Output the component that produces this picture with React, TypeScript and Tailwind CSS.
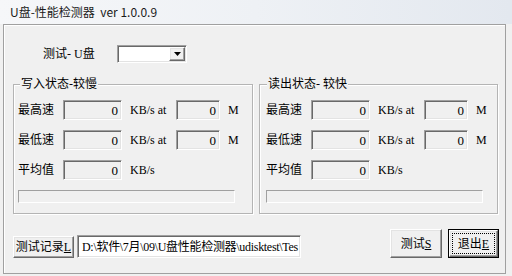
import React from 'react';

const sunken =
  'border border-t-[#a0a0a0] border-l-[#a0a0a0] border-b-white border-r-white shadow-[inset_1px_1px_0_#696969,inset_-1px_-1px_0_#e3e3e3]';
const raised =
  'border border-t-white border-l-white border-b-[#696969] border-r-[#696969] shadow-[inset_-1px_-1px_0_#a0a0a0,inset_1px_1px_0_#e3e3e3]';

function ReadBox({ w }: { w: string }) {
  return (
    <div className={`${w} h-[20px] ${sunken} bg-[#f0f0f0] flex items-center justify-end pr-[3px] text-[13px] leading-none`}>
      0
    </div>
  );
}

function StatusGroup({ title, width, pad, legendLeft }: { title: string; width: string; pad: string; legendLeft: string }) {
  const rows = ['最高速', '最低速', '平均值'];
  return (
    <div className={`relative ${width} h-[130px] border border-[#b4b4b4] shadow-[inset_1px_1px_0_#fff,1px_1px_0_#fff] ${pad} pt-[15px]`}>
      <span className={`absolute top-[-9px] ${legendLeft} bg-[#f0f0f0] px-[1px] text-[12px] leading-[16px]`}>{title}</span>
      <div className="flex flex-col gap-[10px]">
        {rows.map((label, i) => (
          <div key={label} className="flex items-center h-[20px]">
            <span className="w-[45px] text-[12px]">{label}</span>
            <ReadBox w="w-[59px]" />
            <span className="ml-[8px] w-[46px] text-[12px] whitespace-nowrap">{i < 2 ? 'KB/s at' : 'KB/s'}</span>
            {i < 2 && (
              <>
                <ReadBox w="w-[44px]" />
                <span className="ml-[8px] text-[12px]">M</span>
              </>
            )}
          </div>
        ))}
      </div>
      <div className="mt-[10px] w-[217px] h-[13px] border border-t-[#a0a0a0] border-l-[#a0a0a0] border-b-white border-r-white" />
    </div>
  );
}

export default function App() {
  return (
    <div
      className="w-[512px] h-[276px] bg-[#f0f0f0] text-black overflow-hidden"
      style={{ fontFamily: '"Liberation Serif", "Noto Sans CJK SC", serif' }}
    >
      {/* title bar */}
      <div className="h-[24px] bg-linear-to-r from-[#f6f7f9] via-[#eef1f5] to-[#e3e8ef] flex items-center pl-[10px]">
        <span className="text-[12px] leading-none text-[#1a1a1a]" style={{ fontFamily: '"Noto Sans CJK SC", sans-serif' }}>
          U盘-性能检测器&nbsp;&nbsp;ver 1.0.0.9
        </span>
      </div>

      {/* main panel */}
      <div className="ml-[3px] w-[503px] h-[250px] border border-[#a0a0a0] shadow-[inset_1px_1px_0_#fff] pt-[20px] flex flex-col">
        <div className="flex items-center h-[18px]">
          <span className="ml-[39px] w-[74px] text-[12px]">测试- U盘</span>
          <div className={`w-[70px] h-[18px] ${sunken} bg-white flex justify-end items-center pr-[1px]`}>
            <div className={`w-[16px] h-[14px] ${raised} bg-[#f0f0f0] flex items-center justify-center`}>
              <svg width="7" height="4" viewBox="0 0 7 4">
                <polygon points="0,0 7,0 3.5,4" fill="#000" />
              </svg>
            </div>
          </div>
        </div>

        <div className="flex mt-[21px] ml-[9px] gap-[6px]">
          <StatusGroup title="写入状态-较慢" width="w-[240px]" pad="pl-[4px]" legendLeft="left-[6px]" />
          <StatusGroup title="读出状态- 较快" width="w-[239px]" pad="pl-[6px]" legendLeft="left-[7px]" />
        </div>

        <div className="flex items-end mt-[15px] h-[29px] ml-[9px] mr-[6px]">
          <button className={`w-[61px] h-[22px] ${raised} bg-[#f0f0f0] text-[12px] leading-none whitespace-nowrap`}>
            测试记录<span className="underline">L</span>
          </button>
          <div className={`ml-[3px] w-[224px] h-[23px] ${sunken} bg-white flex items-center pl-[4px] overflow-hidden whitespace-nowrap text-[12px] tracking-[-0.3px]`}>
            {'D:\\软件\\7月\\09\\U盘性能检测器\\udisktest\\Tes'}
          </div>
          <div className="flex-1" />
          <button className={`w-[52px] h-[29px] ${raised} bg-[#f0f0f0] text-[12px] leading-none`}>
            测试<span className="underline">S</span>
          </button>
          <button className="ml-[6px] w-[51px] h-[29px] border border-black bg-[#f0f0f0] p-0">
            <div className={`w-full h-full ${raised} p-[2px]`}>
              <div className="w-full h-full border border-dotted border-black flex items-center justify-center text-[12px] leading-none">
                退出<span className="underline">E</span>
              </div>
            </div>
          </button>
        </div>
      </div>
    </div>
  );
}
